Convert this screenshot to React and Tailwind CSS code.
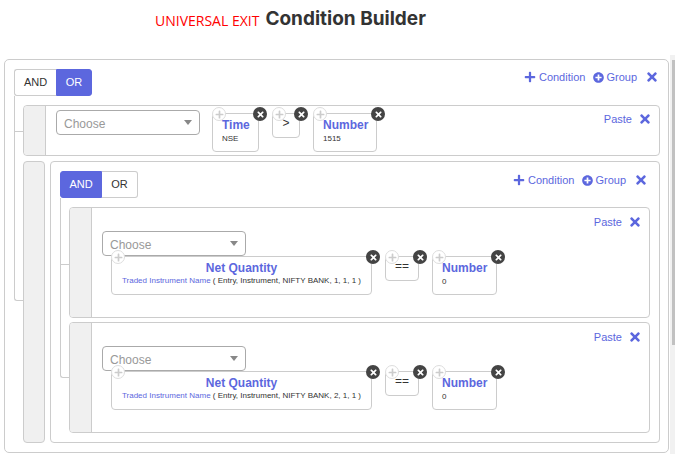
import React from "react";
import { FaPlus, FaPlusCircle, FaTimes } from "react-icons/fa";

function AndOr({ active }) {
  return (
    <div className="flex h-[27px] text-[11px]">
      <div
        className={`flex w-[42px] items-center justify-center rounded-l-[3px] border ${
          active === "AND" ? "border-[#5c67de] bg-[#5c67de] text-white" : "border-r-0 border-[#ccc] bg-white text-[#333]"
        }`}
      >
        AND
      </div>
      <div
        className={`flex w-[36px] items-center justify-center rounded-r-[3px] border ${
          active === "OR" ? "border-[#5c67de] bg-[#5c67de] text-white" : "border-l-0 border-[#ccc] bg-white text-[#333]"
        }`}
      >
        OR
      </div>
    </div>
  );
}

function Actions() {
  return (
    <div className="flex h-[16px] items-center text-[11px] text-[#5c67de]">
      <FaPlus className="mr-[3px] text-[12px]" />
      <span>Condition</span>
      <FaPlusCircle className="ml-[8px] mr-[2px] text-[11px]" />
      <span>Group</span>
      <FaTimes className="ml-[8px] text-[14px]" />
    </div>
  );
}

function Paste() {
  return (
    <div className="flex items-center text-[11px] text-[#5c67de]">
      <span>Paste</span>
      <FaTimes className="ml-[6px] text-[14px]" />
    </div>
  );
}

function Choose() {
  return (
    <div className="flex h-[25px] w-[144px] shrink-0 items-center justify-between rounded-[4px] border border-[#aaa] bg-white pl-[7px] pr-[7px] pt-[2px] text-[12px] text-[#999]">
      <span>Choose</span>
      <span className="mb-[2px] h-0 w-0 border-x-[4px] border-t-[5px] border-x-transparent border-t-[#888]" />
    </div>
  );
}

function Token({ className = "", children }) {
  return (
    <div className={`relative rounded-[4px] border border-[#ccc] bg-white ${className}`}>
      <span className="absolute left-[-1px] top-[-7px] flex h-[14px] w-[14px] items-center justify-center rounded-full border border-[#ddd] bg-white text-[#ccc]">
        <FaPlus className="text-[9px]" />
      </span>
      <span className="absolute right-[-9px] top-[-7px] flex h-[14px] w-[14px] items-center justify-center rounded-full bg-[#444] text-white">
        <FaTimes className="text-[9px]" />
      </span>
      {children}
    </div>
  );
}

function Value({ title, sub, className }) {
  return (
    <Token className={`h-[39px] pl-[9px] pt-[3px] ${className}`}>
      <div className="text-[12px] font-bold leading-[16px] text-[#5c67de]">{title}</div>
      <div className="mt-[1px] text-[8px] leading-[10px] text-[#333]">{sub}</div>
    </Token>
  );
}

function Operator({ label, className }) {
  return (
    <Token className={`flex h-[25px] justify-center pt-[1px] text-[12px] leading-[16px] text-[#333] ${className}`}>
      {label}
    </Token>
  );
}

function Rule({ index }) {
  return (
    <div className="flex h-[111px] overflow-hidden rounded-[4px] border border-[#ccc] bg-white">
      <div className="w-[22px] shrink-0 border-r border-[#ccc] bg-[#f0f0f0]" />
      <div className="min-w-0 flex-1 pl-[10px] pr-[7px] pt-[5px]">
        <div className="flex h-[18px] justify-end">
          <Paste />
        </div>
        <Choose />
        <div className="ml-[9px] flex items-start gap-[13px]">
          <Token className="h-[39px] w-[261px] pt-[3px] text-center">
            <div className="text-[12px] font-bold leading-[16px] text-[#5c67de]">Net Quantity</div>
            <div className="text-[8px] leading-[10px] text-[#333]">
              <span className="text-[#5c67de]">Traded Instrument Name</span> ( Entry, Instrument, NIFTY BANK, {index}, 1, 1 )
            </div>
          </Token>
          <Operator label="==" className="w-[34px]" />
          <Value title="Number" sub="0" className="w-[65px]" />
        </div>
      </div>
    </div>
  );
}

export default function App() {
  return (
    <div className="relative h-[454px] w-[675px] overflow-hidden bg-white font-['Liberation_Sans',Arial,sans-serif]">
      <div className="flex h-[59px] items-start pl-[155px] pt-[8px]">
        <span className="mt-[3px] font-['Open_Sans',sans-serif] text-[14px] font-normal leading-[20px] text-[#f00]">UNIVERSAL EXIT</span>
        <span className="ml-[6px] font-['Inter',sans-serif] text-[19px] font-bold leading-[22px] text-[#333]">Condition Builder</span>
      </div>

      {/* scrollbar */}
      <div className="absolute right-0 top-[55px] h-[399px] w-[5px] bg-[#f1f1f1]">
        <div className="ml-[2px] mt-[5px] h-[285px] w-[3px] bg-[#c1c1c1]" />
      </div>

      <div className="ml-[4px] h-[394px] w-[665px] rounded-[5px] border border-[#ccc] bg-white pl-[9px] pr-[8px] pt-[9px]">
        <div className="flex items-start justify-between pr-[1px]">
          <AndOr active="OR" />
          <Actions />
        </div>

        <div className="relative mt-[9px] flex flex-col gap-[5px] pl-[9px]">
          {/* tree connectors */}
          <div className="absolute left-0 top-[-9px] h-[205px] w-[9px] rounded-bl-[3px] border-b border-l border-[#ccc]" />
          <div className="absolute left-0 top-[26px] h-px w-[9px] bg-[#ccc]" />

          <div className="relative flex h-[51px] rounded-[4px] border border-[#ccc] bg-white">
            <div className="w-[22px] shrink-0 rounded-l-[4px] border-r border-[#ccc] bg-[#f0f0f0]" />
            <div className="ml-[10px] mt-[4px]">
              <Choose />
            </div>
            <div className="ml-[12px] mt-[7px] flex items-start gap-[13px]">
              <Value title="Time" sub="NSE" className="w-[47px]" />
              <Operator label=">" className="w-[28px]" />
              <Value title="Number" sub="1515" className="w-[64px]" />
            </div>
            <div className="ml-auto mr-[7px] mt-[5px]">
              <Paste />
            </div>
          </div>

          <div className="flex h-[282px] gap-[5px]">
            <div className="w-[22px] shrink-0 rounded-[4px] border border-[#ccc] bg-[#f0f0f0]" />
            <div className="min-w-0 flex-1 rounded-[4px] border border-[#ccc] bg-white pl-[9px] pr-[9px] pt-[9px]">
              <div className="flex items-start justify-between pr-[2px]">
                <AndOr active="AND" />
                <div className="mt-[1px]">
                  <Actions />
                </div>
              </div>
              <div className="relative mt-[9px] flex flex-col gap-[4px] pl-[9px]">
                <div className="absolute left-0 top-[-9px] h-[180px] w-[9px] rounded-bl-[3px] border-b border-l border-[#ccc]" />
                <div className="absolute left-0 top-[57px] h-px w-[9px] bg-[#ccc]" />
                <Rule index={1} />
                <Rule index={2} />
              </div>
            </div>
          </div>
        </div>
      </div>
    </div>
  );
}
